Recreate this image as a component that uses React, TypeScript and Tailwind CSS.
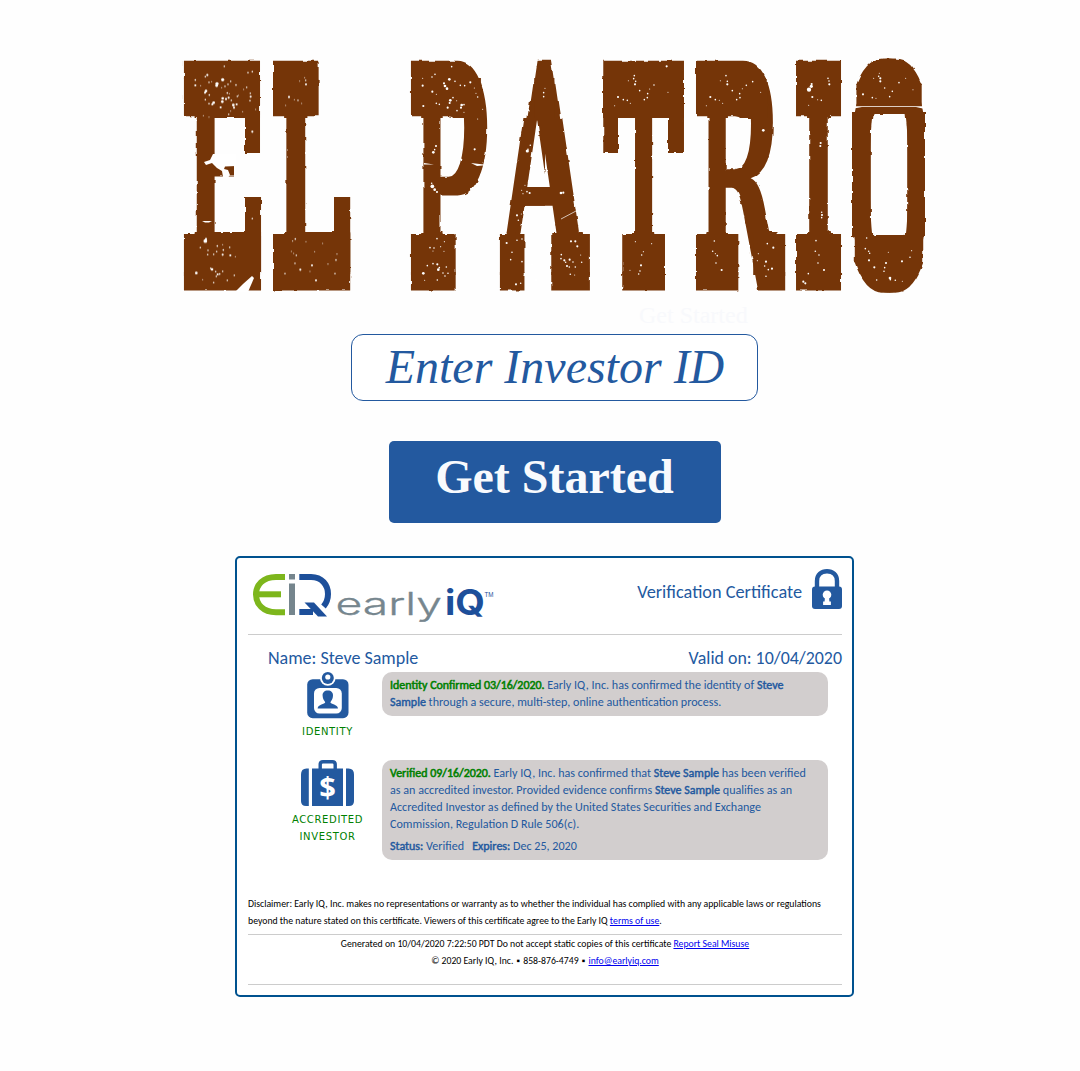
import { Fragment, type ReactNode } from 'react';

type Glyph = { ch: string; x: number; sx: number; y: number; sy: number };

const GLYPHS: Glyph[] = [
  { ch: 'E', x: 178.5, sx: 0.1161, y: 290.6, sy: 0.3154 },
  { ch: 'L', x: 267.3, sx: 0.1217, y: 290.6, sy: 0.3154 },
  { ch: 'P', x: 405.7, sx: 0.1121, y: 290.6, sy: 0.3154 },
  { ch: 'A', x: 500.8, sx: 0.1132, y: 290.6, sy: 0.3168 },
  { ch: 'T', x: 602, sx: 0.1117, y: 290.6, sy: 0.3154 },
  { ch: 'R', x: 690.7, sx: 0.1129, y: 290.6, sy: 0.3154 },
  { ch: 'I', x: 790.4, sx: 0.12, y: 290.6, sy: 0.3154 },
  { ch: 'O', x: 845.9, sx: 0.0991, y: 288.3, sy: 0.3095 },
];

type Box = [number, number, number, number];

/* Serifs stretched vertically into heavy slabs: source box, horizontal and vertical reach, painted box. */
const SLABS: { from: Box; reach: string; to: Box }[] = [
  { from: [170, 57, 680, 27], reach: '0 37', to: [170, 78, 680, 40] },
  { from: [170, 264, 680, 30], reach: '0 38', to: [170, 232, 680, 43] },
  { from: [846, 50, 85, 35], reach: '6 0', to: [852, 50, 73, 35] },
  { from: [846, 50, 85, 35], reach: '6 36', to: [852, 84, 73, 30] },
  { from: [852, 50, 73, 34], reach: '0 36', to: [868, 70, 41, 16] },
  { from: [846, 262, 85, 35], reach: '6 0', to: [852, 262, 73, 35] },
  { from: [846, 262, 85, 35], reach: '6 38', to: [852, 235, 73, 28] },
  { from: [852, 262, 73, 32], reach: '0 38', to: [868, 260, 41, 22] },
  { from: [852, 165, 73, 20], reach: '0 70', to: [852, 112, 73, 125] },
  { from: [245, 66, 17, 14], reach: '0 80', to: [245, 78, 17, 75] },
  { from: [245, 272, 17, 14], reach: '0 80', to: [245, 197, 17, 75] },
  { from: [334, 272, 17, 14], reach: '0 80', to: [334, 197, 17, 75] },
  { from: [602, 66, 16, 12], reach: '0 80', to: [602, 78, 16, 75] },
  { from: [668, 66, 16, 12], reach: '0 80', to: [668, 78, 16, 75] },
];

/* Columns of the middle band where the stems are slimmed: x, width, amount. */
const STEMS: [number, number, number][] = [
  [170, 56, 2],
  [226, 8, 0],
  [265, 55, 2],
  [400, 48, 2],
  [448, 47, 0],
  [625, 37, 2],
  [690, 42, 2],
  [732, 58, 0],
  [790, 55, 2],
  [852, 73, 1],
];

/* Worn spots in the ink, grouped by area: origin x, then [x, y, radius] at triple scale. */
const SPECKS: { ox: number; dots: [number, number, number][] }[] = [
  {
    ox: 170,
    dots: [
      [163, 64, 3], [112, 90, 4], [106, 95, 3], [158, 104, 6], [141, 116, 6], [140, 122, 5], [125, 110, 2], [117, 112, 3],
      [76, 105, 3], [76, 121, 4], [92, 122, 2], [108, 138, 5], [105, 143, 4], [118, 150, 3], [106, 164, 3], [117, 176, 3],
      [131, 173, 5], [127, 178, 4], [158, 160, 5], [157, 170, 5], [168, 162, 4], [176, 158, 4], [184, 166, 3], [152, 187, 4],
      [190, 180, 5], [200, 178, 4], [192, 188, 4], [202, 154, 3], [205, 151, 2], [198, 120, 3], [182, 109, 3], [174, 118, 3],
      [165, 124, 3], [234, 83, 3], [247, 80, 3], [230, 127, 3], [221, 133, 2], [241, 145, 3], [242, 155, 4], [240, 167, 3],
      [257, 193, 2], [218, 200, 2], [176, 208, 3], [182, 198, 2], [100, 212, 2], [117, 216, 2], [247, 260, 4], [155, 128, 2],
      [172, 144, 3], [178, 146, 2], [247, 521, 3], [106, 588, 7], [108, 582, 4], [91, 608, 3], [114, 616, 3], [113, 629, 3],
      [131, 628, 3], [140, 620, 3], [142, 603, 3], [158, 599, 2], [160, 615, 3], [158, 629, 4], [179, 607, 3], [181, 631, 4],
      [196, 635, 2], [79, 684, 5], [126, 673, 5], [122, 670, 3], [137, 680, 3], [143, 688, 4], [139, 694, 3], [149, 687, 3],
      [158, 679, 3], [131, 713, 3], [172, 706, 3], [193, 691, 3], [98, 704, 2],
      [404, 98, 2], [407, 106, 3], [408, 118, 4], [389, 108, 2], [357, 156, 4], [373, 164, 2], [384, 166, 3], [395, 175, 2],
      [347, 181, 2], [376, 582, 3], [368, 588, 2], [408, 590, 2], [458, 595, 2], [364, 619, 2], [371, 625, 2], [379, 631, 3],
      [375, 655, 3], [434, 620, 2], [426, 661, 4], [420, 679, 2], [391, 674, 4], [345, 686, 3], [438, 706, 4], [474, 657, 2],
      [498, 645, 3], [495, 686, 3], [501, 627, 2],
    ],
  },
  {
    ox: 395,
    dots: [
      [170, 65, 3], [120, 88, 3], [111, 96, 3], [163, 103, 5], [147, 115, 4], [150, 123, 5], [156, 131, 5], [83, 100, 2],
      [83, 122, 4], [112, 140, 4], [124, 148, 2], [124, 175, 3], [133, 178, 3], [166, 166, 5], [164, 174, 4], [174, 158, 3],
      [200, 180, 5], [198, 188, 4], [207, 179, 3], [185, 167, 2], [226, 112, 4], [209, 122, 3], [196, 121, 3], [180, 109, 3],
      [238, 129, 2], [248, 156, 3], [243, 145, 2], [85, 183, 4], [158, 188, 4], [186, 197, 3], [207, 202, 2], [263, 193, 2],
      [248, 222, 2], [123, 303, 4], [115, 322, 5], [119, 314, 3], [239, 313, 4], [112, 424, 7], [119, 434, 5], [126, 441, 4],
      [110, 415, 3], [258, 388, 2], [126, 581, 3], [148, 590, 2], [105, 608, 3], [117, 609, 3], [114, 618, 2], [137, 605, 2],
      [147, 619, 2], [85, 685, 5], [97, 662, 3], [114, 656, 3], [127, 658, 4], [130, 674, 5], [133, 668, 3], [144, 684, 3],
      [154, 666, 3], [159, 685, 3], [150, 693, 3], [89, 706, 2], [127, 705, 3],
      [450, 130, 2], [446, 143, 3], [446, 155, 3], [406, 301, 3], [397, 318, 6], [399, 313, 3], [408, 390, 3], [390, 421, 2],
      [380, 436, 2], [396, 440, 3], [404, 444, 4], [384, 446, 2], [498, 444, 5], [505, 443, 4], [366, 511, 4], [379, 507, 2],
      [370, 526, 3], [381, 582, 3], [366, 586, 3], [335, 594, 4], [351, 622, 3], [347, 644, 3], [381, 650, 3], [398, 648, 3],
      [411, 659, 3], [391, 683, 2], [423, 704, 4], [363, 718, 4], [377, 715, 3],
      [528, 589, 4], [541, 589, 4], [547, 604, 4], [499, 629, 3], [498, 641, 3], [508, 646, 4], [512, 652, 3], [524, 644, 4],
      [516, 663, 4], [523, 666, 3], [534, 651, 3], [541, 666, 3], [560, 652, 3], [557, 630, 2], [526, 688, 3], [539, 690, 2],
    ],
  },
  {
    ox: 590,
    dots: [
      [230, 64, 4], [133, 92, 3], [131, 101, 3], [137, 109, 3], [135, 118, 4], [115, 107, 2], [192, 120, 3], [149, 137, 3],
      [179, 132, 2], [173, 146, 3], [172, 158, 3], [163, 164, 3], [84, 156, 4], [100, 164, 3], [112, 166, 3], [121, 175, 2],
      [74, 182, 2], [234, 142, 2], [136, 590, 2], [185, 596, 2], [160, 620, 2], [155, 630, 3], [153, 661, 4], [120, 676, 2],
      [150, 678, 3], [146, 687, 3],
      [408, 92, 3], [412, 109, 3], [412, 118, 4], [391, 107, 2], [469, 121, 3], [427, 137, 3], [457, 131, 2], [449, 146, 3],
      [450, 158, 3], [440, 164, 3], [361, 156, 4], [376, 164, 3], [388, 166, 2], [398, 175, 2], [349, 182, 2], [488, 110, 3],
      [512, 142, 2], [520, 256, 5], [373, 588, 3], [368, 619, 3], [376, 626, 2], [382, 632, 3], [378, 654, 3], [395, 675, 4],
      [532, 596, 3], [550, 608, 4], [505, 626, 2], [502, 647, 2], [528, 650, 4], [524, 663, 3], [546, 671, 4], [535, 674, 3],
      [528, 694, 3],
    ],
  },
  {
    ox: 740,
    dots: [
      [207, 134, 8], [214, 124, 6], [215, 117, 4], [217, 156, 4], [264, 100, 3], [267, 108, 3], [268, 118, 4], [233, 164, 2],
      [244, 166, 3], [206, 181, 2], [242, 294, 4], [241, 303, 4], [245, 502, 3], [246, 510, 4], [245, 518, 3], [228, 587, 3],
      [226, 619, 3], [237, 630, 3], [234, 654, 3], [252, 675, 4], [205, 686, 3], [190, 710, 4], [196, 715, 4],
      [418, 85, 2], [421, 100, 4], [421, 109, 4], [401, 100, 2], [416, 94, 3], [434, 129, 3], [477, 113, 3], [497, 100, 2],
      [519, 134, 2], [457, 139, 3], [449, 155, 3], [369, 148, 4], [397, 158, 3], [408, 160, 2],
      [380, 579, 3], [376, 611, 3], [386, 619, 3], [389, 625, 3], [387, 646, 4], [403, 667, 4], [438, 654, 4], [434, 668, 3],
      [432, 679, 3], [486, 649, 4], [510, 637, 3], [515, 617, 2], [445, 622, 2], [450, 699, 5], [451, 704, 3], [410, 705, 3],
      [466, 706, 3], [487, 709, 2],
    ],
  },
];

function Wordmark() {
  return (
    <svg className="block h-[310px] w-[1080px] overflow-visible" viewBox="0 0 1080 310" aria-label="EL PATRIO">
      <defs>
        <filter id="ink" filterUnits="userSpaceOnUse" x="170" y="50" width="770" height="250" colorInterpolationFilters="sRGB">
          <feOffset in="SourceGraphic" dx="0" dy="0" x="170" y="50" width="770" height="68" result="upper" />
          <feOffset in="SourceGraphic" dx="0" dy="0" x="170" y="233" width="770" height="67" result="lower" />
          {STEMS.map(([x, w, r], i) =>
            r > 0 ? (
              <feMorphology key={i} in="SourceGraphic" operator="erode" radius={`${r} 0`} x={x} y={118} width={w} height={115} result={`stem${i}`} />
            ) : (
              <feOffset key={i} in="SourceGraphic" dx="0" dy="0" x={x} y={118} width={w} height={115} result={`stem${i}`} />
            ),
          )}
          <feOffset in="SourceGraphic" dx="0" dy="-6" x="495" y="84" width="103" height="18" result="shoulder" />
          <feOffset in="SourceGraphic" dx="0" dy="-12" x="495" y="101" width="103" height="18" result="chest" />
          <feOffset in="SourceGraphic" dx="0" dy="-19" x="495" y="118" width="103" height="115" result="legs" />
          <feMorphology in="legs" operator="dilate" radius="3 0" x="495" y="118" width="50" height="115" result="leftLeg" />
          {SLABS.map((s, i) => (
            <Fragment key={i}>
              <feOffset in="SourceGraphic" dx="0" dy="0" x={s.from[0]} y={s.from[1]} width={s.from[2]} height={s.from[3]} result={`serif${i}`} />
              <feMorphology in={`serif${i}`} operator="dilate" radius={s.reach} x={s.to[0]} y={s.to[1]} width={s.to[2]} height={s.to[3]} result={`slab${i}`} />
            </Fragment>
          ))}
          <feMerge result="shape">
            <feMergeNode in="upper" />
            <feMergeNode in="lower" />
            <feMergeNode in="shoulder" />
            <feMergeNode in="chest" />
            <feMergeNode in="legs" />
            <feMergeNode in="leftLeg" />
            {STEMS.map((_, i) => (
              <feMergeNode key={i} in={`stem${i}`} />
            ))}
            {SLABS.map((_, i) => (
              <feMergeNode key={i} in={`slab${i}`} />
            ))}
          </feMerge>
          <feTurbulence type="fractalNoise" baseFrequency="0.14" numOctaves="1" seed="7" result="noise" />
          <feDisplacementMap in="shape" in2="noise" scale="3" xChannelSelector="R" yChannelSelector="G" />
        </filter>
      </defs>
      <g filter="url(#ink)" fill="#753508" className="font-['DejaVu_Serif',serif] font-bold" fontSize="1000">
        {GLYPHS.map((g, i) => (
          <text key={i} transform={`translate(${g.x} ${g.y}) scale(${g.sx} ${g.sy})`}>
            {g.ch}
          </text>
        ))}
      </g>
      {SPECKS.map((s) => (
        <g key={s.ox} fill="#fff" transform={`translate(${s.ox} 45) scale(0.3333)`}>
          {s.dots.map(([x, y, r], i) => (
            <circle key={i} cx={x} cy={y} r={r * 0.8} />
          ))}
        </g>
      ))}
      <g fill="#fff">
        <path d="M204 162 L210 160 L213 154 L236 154 L236 166 L225 166.5 L224 169 L228 170 L230 175 L227 179 L223 177 L222 171 L217 168 L212 163 L206 165Z" />
        <path d="M235 292 L243 284 L252 276 L254 278 L248 292Z" />
        <path d="M202 221 h10 l-3 1.5 h-4Z" />
        <path d="M424 163 L434 164.5 L424 164.5Z M471 163 L488 165 L477 166Z" />
        <path d="M851 106.2 h75 v3 l-10 -2.2 h-54 l-11 2Z" />
      </g>
      <path d="M561 219 L576 211" stroke="#fff" strokeWidth="0.7" />
    </svg>
  );
}

function EarlyIqLogo() {
  return (
    <svg className="block h-[56px] w-[250px]" viewBox="248 568 250 56">
      <g fill="none" strokeWidth="6">
        <path d="M285 577 H276 C263 577 256 585 256 594.5 C256 604 263 612.3 276 612.3 H285" stroke="#7db61c" />
        <path d="M256 594.3 H281" stroke="#7db61c" />
        <path d="M292 583.5 V615 M292 574 V579.5" stroke="#75858d" />
        <path d="M299.3 577 H311 C322 577 328 585 328 594 C328 599 326.5 603 323.5 606.5" stroke="#1d4f9a" />
        <path d="M299.3 612 H313" stroke="#1d4f9a" />
      </g>
      <path d="M304.5 602.5 H314 L327 616.5 H318 Z" fill="#1d4f9a" />
      <text x="335.5" y="615" fontSize="31" fill="#76868e" textLength="106.5" lengthAdjust="spacingAndGlyphs" className="font-['Inter',sans-serif] font-light" stroke="#76868e" strokeWidth="0.3">
        early
      </text>
      <text x="445" y="615" fontSize="35" fill="#1d4f9a" textLength="40" lengthAdjust="spacingAndGlyphs" className="font-['Inter',sans-serif] font-bold">
        iQ
      </text>
      <text x="484.5" y="596.5" fontSize="6.5" fill="#1d4f9a" textLength="9" lengthAdjust="spacingAndGlyphs" className="font-['Liberation_Sans',sans-serif]">
        TM
      </text>
    </svg>
  );
}

function LockIcon() {
  return (
    <svg className="block h-[40px] w-[30px]" viewBox="0 0 30 40">
      <path d="M5 19 V12 C5 5.5 9.5 2.2 15 2.2 S25 5.5 25 12 V19" fill="none" stroke="#23599f" strokeWidth="4.4" />
      <rect x="0" y="17.5" width="30" height="22.5" rx="3" fill="#23599f" />
      <circle cx="15" cy="25.8" r="4.3" fill="#fff" />
      <path d="M13 28 h4 l0.4 4.5 h1.5 v3.5 h-7.8 v-3.5 h1.5Z" fill="#fff" />
    </svg>
  );
}

function IdentityIcon() {
  return (
    <svg className="block h-[47px] w-[42px]" viewBox="306.8 671.8 42 47">
      <rect x="307" y="679" width="41.3" height="39" rx="5.5" fill="#23599f" />
      <circle cx="327.6" cy="677.8" r="7.8" fill="#fff" />
      <circle cx="327.6" cy="677.8" r="6" fill="#23599f" />
      <circle cx="327.6" cy="676.8" r="2.6" fill="#fff" />
      <rect x="313.8" y="687.8" width="27.8" height="25.6" rx="5.5" fill="#fff" />
      <path d="M327.6 690.3 C331 690.3 333 692.3 332.8 695.5 C332.7 699 331 700.5 330.2 702 C330.5 704.2 337.4 703.8 337.8 708.3 H317.4 C317.8 703.8 324.7 704.2 325 702 C324.2 700.5 322.5 699 322.4 695.5 C322.2 692.3 324.2 690.3 327.6 690.3Z" fill="#23599f" />
    </svg>
  );
}

function BriefcaseIcon() {
  return (
    <svg className="block h-[47px] w-[54px]" viewBox="301 760 54 47">
      <g fill="#23599f">
        <path d="M308.8 768.5 V806 H306 Q301 806 301 801 V774.5 Q301 768.5 306.5 768.5Z" />
        <path d="M346 768.5 V806 H349 Q354 806 354 801 V774.5 Q354 768.5 348.5 768.5Z" />
        <rect x="312" y="768.5" width="31" height="37.5" />
      </g>
      <path d="M320.2 770 V764.5 Q320.2 761.8 323 761.8 H332.4 Q335.2 761.8 335.2 764.5 V770" fill="none" stroke="#23599f" strokeWidth="3.4" />
      <text x="327.5" y="798" textAnchor="middle" fontSize="29" fill="#fff" className="font-['Open_Sans',sans-serif] font-bold">
        $
      </text>
    </svg>
  );
}

function Label({ children }: { children: ReactNode }) {
  return (
    <div className="whitespace-nowrap text-center font-['DejaVu_Sans',sans-serif] text-[10px] leading-[17px] tracking-[0.65px] text-[#008000]">
      {children}
    </div>
  );
}

function Link({ children }: { children: ReactNode }) {
  return <a className="text-[#0000ee] underline">{children}</a>;
}

function Strong({ children }: { children: ReactNode }) {
  return <b className="text-[12px] font-normal leading-[0px] [-webkit-text-stroke:0.45px_currentColor]">{children}</b>;
}

function Green({ children }: { children: ReactNode }) {
  return <b className="text-[11.95px] font-normal leading-[0px] text-[#008000] [-webkit-text-stroke:0.55px_currentColor]">{children}</b>;
}

export default function App() {
  return (
    <div className="flex h-[1071px] w-[1080px] flex-col overflow-hidden bg-[#fefefe]">
      <div className="h-[301px] w-[1080px]">
        <Wordmark />
      </div>
      <div className="h-[33px] pl-[639px] font-['Liberation_Serif',serif] text-[24px] leading-[28px] text-[#f8f9fc]">Get Started</div>
      <div className="ml-[351px] h-[67px] w-[407px] rounded-[12px] border border-[#23599f] bg-white pl-px text-center font-['Liberation_Serif',serif] text-[48px] italic leading-[64px] text-[#23599f]">
        Enter Investor ID
      </div>
      <div className="ml-[389px] mt-[40px] h-[82px] w-[332px] rounded-[5px] bg-[#23599f] pr-px text-center font-['Liberation_Serif',serif] text-[48px] font-bold leading-[72px] text-[#f8fafd]">
        Get Started
      </div>
      <div className="ml-[235px] mt-[33px] h-[441px] w-[619px] rounded-[5px] border-2 border-[#00528f] bg-white pl-[11px] pr-[10px] font-['Carlito','Lato',sans-serif] text-[#23599f]">
        <div className="flex h-[77px] justify-between border-b border-[#cccccc] pt-[10px]">
          <EarlyIqLogo />
          <div className="flex gap-[10px] pt-px">
            <span className="pt-[12px] text-[18.3px] leading-[22px]">Verification Certificate</span>
            <LockIcon />
          </div>
        </div>
        <div className="flex h-[37px] justify-between pl-[20px] pt-[12px] text-[18px] leading-[22px]">
          <span>Name: Steve Sample</span>
          <span className="text-[17.9px]">Valid on: 10/04/2020</span>
        </div>
        <div className="flex h-[88px] items-start">
          <div className="flex w-[134px] flex-col items-center pl-[25px]">
            <IdentityIcon />
            <div className="h-[4px]" />
            <Label>IDENTITY</Label>
          </div>
          <div className="h-[44px] w-[446px] whitespace-nowrap rounded-[10px] bg-[#d2cece] px-[8px] pt-[4px] text-[12.1px] leading-[17px]">
            <div>
              <Green>Identity Confirmed 03/16/2020.</Green> Early IQ, Inc. has confirmed the identity of <Strong>Steve</Strong>
            </div>
            <div>
              <Strong>Sample</Strong> through a secure, multi-step, online authentication process.
            </div>
          </div>
        </div>
        <div className="flex h-[136px] items-start">
          <div className="flex w-[134px] flex-col items-center pl-[25px]">
            <BriefcaseIcon />
            <div className="h-[4px]" />
            <Label>ACCREDITED</Label>
            <Label>INVESTOR</Label>
          </div>
          <div className="h-[100px] w-[446px] whitespace-nowrap rounded-[10px] bg-[#d2cece] px-[8px] pt-[4px] text-[12.1px] leading-[17px]">
            <div>
              <Green>Verified 09/16/2020.</Green> Early IQ, Inc. has confirmed that <Strong>Steve Sample</Strong> has been verified
            </div>
            <div>
              as an accredited investor. Provided evidence confirms <Strong>Steve Sample</Strong> qualifies as an
            </div>
            <div>Accredited Investor as defined by the United States Securities and Exchange</div>
            <div>Commission, Regulation D Rule 506(c).</div>
            <div className="mt-[5px]">
              <Strong>Status:</Strong> Verified &nbsp; <Strong>Expires:</Strong> Dec 25, 2020
            </div>
          </div>
        </div>
        <div className="h-[39px] whitespace-nowrap border-b border-[#cccccc] text-[9.77px] leading-[17px] text-black">
          <div>
            Disclaimer: Early IQ, Inc. makes no representations or warranty as to whether the individual has complied with any applicable laws or
            regulations
          </div>
          <div>
            beyond the nature stated on this certificate. Viewers of this certificate agree to the Early IQ <Link>terms of use</Link>.
          </div>
        </div>
        <div className="h-[50px] whitespace-nowrap border-b border-[#cccccc] pt-px text-center text-[9.75px] leading-[17px] text-black">
          <div>
            Generated on 10/04/2020 7:22:50 PDT Do not accept static copies of this certificate <Link>Report Seal Misuse</Link>
          </div>
          <div className="-mt-px leading-[18px]">
            © 2020 Early IQ, Inc. <span className="px-px">▪</span> 858-876-4749 <span className="px-px">▪</span> <Link>info@earlyiq.com</Link>
          </div>
        </div>
      </div>
    </div>
  );
}
